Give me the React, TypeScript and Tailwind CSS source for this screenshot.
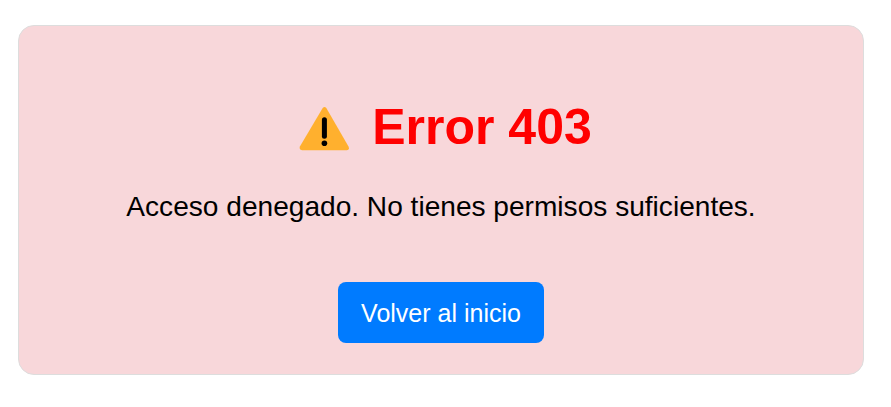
export default function App() {
  return (
    <main className="h-[407px] w-[891px] bg-white pt-[25px] pl-[18px] font-['Liberation_Sans',Arial,sans-serif]">
      <section className="flex h-[350px] w-[846px] flex-col items-center rounded-2xl border border-[#dddddd] bg-[#f8d7da]">
        <h1 className="mt-[72px] flex h-[58px] items-center pl-2 text-[50px] leading-[58px] font-bold text-[#ff0000]">
          <svg className="mr-[23px] h-12 w-[52px] -ml-px" viewBox="-1.5 0 52 48" aria-hidden="true">
            <path d="M24.2 5Q26 2.8 27.8 5L50 43.4Q51.4 47.2 48.2 47.2H3.6Q.2 47.2 1.4 43.4Z" fill="#ffb02e" />
            <rect x="23.4" y="14.3" width="5" height="21.4" rx="2.5" fill="#000" />
            <circle cx="25.9" cy="40.2" r="2.8" fill="#000" />
          </svg>
          Error 403
        </h1>
        <p className="mt-[35px] text-[28.1px] leading-[32px] text-black">Acceso denegado. No tienes permisos suficientes.</p>
        <button className="mt-[59px] h-[61px] w-[206px] rounded-lg bg-[#007bff] pt-0.5 text-[25px] text-white">Volver al inicio</button>
      </section>
    </main>
  );
}
